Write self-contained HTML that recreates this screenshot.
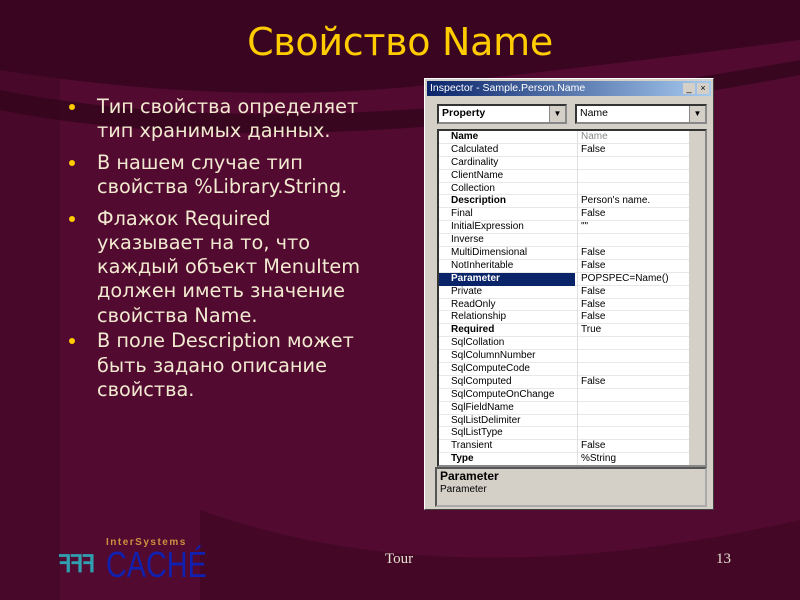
<!DOCTYPE html>
<html><head><meta charset="utf-8"><style>
body{margin:0;width:800px;height:600px;overflow:hidden;position:relative;background:#520a30;font-family:"Liberation Sans",sans-serif}
.bg{position:absolute;left:0;top:0}
h1{position:absolute;left:0;width:800px;top:20px;margin:0;text-align:center;color:#ffcc00;font-weight:normal;font-size:38px;font-family:"DejaVu Sans",sans-serif;letter-spacing:-0.3px}
ul{position:absolute;left:68px;top:95px;width:340px;margin:0;padding:0;list-style:none;color:#f2ead0;font-size:19.3px;line-height:24.2px;font-family:"DejaVu Sans",sans-serif;white-space:nowrap}
li{position:relative;padding-left:29px;margin-bottom:7.5px}
li.l4{margin-top:-6px}
li:before{content:"";position:absolute;left:1px;top:9px;width:6px;height:6px;border-radius:50%;background:#ffcc00}
.win{position:absolute;left:424px;top:78px;width:290px;height:432px;background:#d4d0c8;border:1px solid #fff;border-right-color:#404040;border-bottom-color:#404040;box-sizing:border-box;font-size:10px;color:#000}
.tb{position:absolute;left:2px;top:2px;right:2px;height:15px;background:linear-gradient(90deg,#0a246a,#a6caf0);color:#fff;font-size:10.5px;line-height:15px;padding-left:3px}
.tbb{position:absolute;top:2px;width:12px;height:11px;background:#d4d0c8;font-size:9px;line-height:10px;text-align:center;color:#000}
.combo{position:absolute;top:25px;height:20px;background:#fff;border:2px inset #888;box-sizing:border-box;line-height:15px;padding-left:3px;font-size:10.5px}
.dd{position:absolute;right:0;top:0;width:15px;height:16px;background:#d4d0c8;border-left:1px solid #888;text-align:center;font-size:8px;line-height:16px}
.grid{position:absolute;left:12px;top:50px;width:270px;height:338px;background:#fff;border:2px inset #888;box-sizing:border-box;overflow:hidden}
.row{height:12.9px;line-height:12.9px;border-bottom:1px solid #e8e8e8;box-sizing:border-box;position:relative}
.row span{position:absolute;left:12px}
.row i{position:absolute;left:138px;font-style:normal;border-left:1px solid #e0e0e0;padding-left:3px;height:12.9px}
.b{font-weight:bold}
.sel span{background:#0a246a;color:#fff;left:0;width:124px;padding-left:12px}
.sb{position:absolute;right:0;top:0;width:16px;height:100%;background:#d4d0c8}
.desc{position:absolute;left:10px;top:388px;width:272px;height:40px;border:2px inset #aaa;box-sizing:border-box;font-size:10px;padding:1px 3px;line-height:12px}
</style></head><body>
<svg class="bg" width="800" height="600">
<path d="M0 70 Q250 110 470 80 Q650 60 800 40 L800 0 L0 0Z" fill="#3a0520"/>
<path d="M0 90 Q300 150 800 60 L800 75 Q300 170 0 110Z" fill="#2e0418" opacity=".7"/>
<path d="M200 510 Q450 600 800 520 L800 600 L200 600Z" fill="#3e0622" opacity=".7"/>
<path d="M0 0 L60 0 L60 600 L0 600Z" fill="#3a0520" opacity=".4"/>
</svg>
<h1>Свойство Name</h1>
<ul>
<li>Тип свойства определяет<br>тип хранимых данных.</li>
<li>В нашем случае тип<br>свойства %Library.String.</li>
<li>Флажок Required<br>указывает на то, что<br>каждый объект MenuItem<br>должен иметь значение<br>свойства Name.</li>
<li class="l4">В поле Description может<br>быть задано описание<br>свойства.</li>
</ul>
<div class="win">
<div class="tb">Inspector - Sample.Person.Name<div class="tbb" style="right:16px">_</div><div class="tbb" style="right:2px">×</div></div>
<div class="combo" style="left:12px;width:130px"><b>Property</b><div class="dd">▼</div></div>
<div class="combo" style="left:150px;width:132px">Name<div class="dd">▼</div></div>
<div class="grid">
<div class="row"><span class="b">Name</span><i style="color:#888">Name</i></div>
<div class="row"><span>Calculated</span><i>False</i></div>
<div class="row"><span>Cardinality</span><i></i></div>
<div class="row"><span>ClientName</span><i></i></div>
<div class="row"><span>Collection</span><i></i></div>
<div class="row"><span class="b">Description</span><i>Person's name.</i></div>
<div class="row"><span>Final</span><i>False</i></div>
<div class="row"><span>InitialExpression</span><i>""</i></div>
<div class="row"><span>Inverse</span><i></i></div>
<div class="row"><span>MultiDimensional</span><i>False</i></div>
<div class="row"><span>NotInheritable</span><i>False</i></div>
<div class="row sel"><span class="b">Parameter</span><i>POPSPEC=Name()</i></div>
<div class="row"><span>Private</span><i>False</i></div>
<div class="row"><span>ReadOnly</span><i>False</i></div>
<div class="row"><span>Relationship</span><i>False</i></div>
<div class="row"><span class="b">Required</span><i>True</i></div>
<div class="row"><span>SqlCollation</span><i></i></div>
<div class="row"><span>SqlColumnNumber</span><i></i></div>
<div class="row"><span>SqlComputeCode</span><i></i></div>
<div class="row"><span>SqlComputed</span><i>False</i></div>
<div class="row"><span>SqlComputeOnChange</span><i></i></div>
<div class="row"><span>SqlFieldName</span><i></i></div>
<div class="row"><span>SqlListDelimiter</span><i></i></div>
<div class="row"><span>SqlListType</span><i></i></div>
<div class="row"><span>Transient</span><i>False</i></div>
<div class="row"><span class="b">Type</span><i>%String</i></div>
<div class="sb"></div>
</div>
<div class="desc"><b style="font-size:12px">Parameter</b><br>Parameter</div>
</div>
<div style="position:absolute;left:106px;top:537px;color:#d09040;font-size:10px;font-weight:bold;letter-spacing:1.5px">InterSystems</div>
<div style="position:absolute;left:58px;top:550px;color:#30a0b0;font-size:24px;font-weight:bold;letter-spacing:-2px">ꟻꟻꟻ</div>
<div style="position:absolute;left:106px;top:544px;color:#1020b0;font-size:36px;transform:scaleX(.8);transform-origin:left">CACHÉ</div>
<div style="position:absolute;left:385px;top:551px;color:#e8e0d0;font-family:'Liberation Serif',serif;font-size:15px">Tour</div>
<div style="position:absolute;left:716px;top:551px;color:#e8e0d0;font-family:'Liberation Serif',serif;font-size:15px">13</div>
</body></html>
